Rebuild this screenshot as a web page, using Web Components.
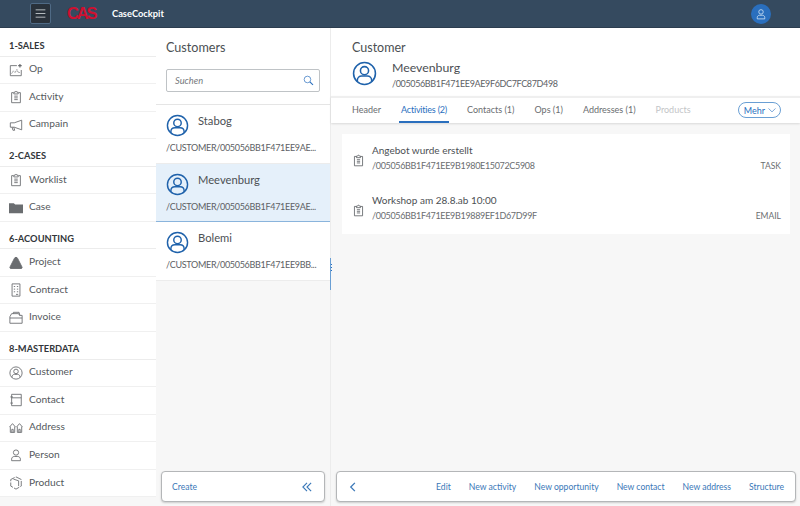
<!DOCTYPE html>
<html lang="en">
<head>
<meta charset="utf-8">
<title>CaseCockpit</title>
<style>
  html, body { margin: 0; height: 100%; overflow: hidden; }
  body { font-family: "Lato", "Noto Sans", sans-serif; color: #32363a; background: #f7f7f7; }
</style>
</head>
<body>
<case-cockpit></case-cockpit>

<script>
// all icons in one place, 16x16 box, grey or blue comes from currentColor
const ICONS = {
  menu: '<path d="M2 3.5h12M2 8h12M2 12.5h12"/>',
  person: '<circle cx="8" cy="5.2" r="3"/><path d="M3 14.5v-1.8c0-1.7 1.3-3 3-3h4c1.7 0 3 1.3 3 3v1.8z"/>',
  customer: '<circle cx="8" cy="8" r="7"/><circle cx="8" cy="6.2" r="2.6"/><path d="M3.4 13.2v-.8c0-1.6 1.2-2.8 2.8-2.8h3.6c1.6 0 2.8 1.2 2.8 2.8v.8"/>',
  chart: '<path d="M9 3H1.5v11.5H14V8"/><path d="M3 12l2-3 2 2 2-3.500 2 4 1.500-1.500" stroke-dasharray="1.500 1"/><path d="M12.500 1v4M10.500 3h4" stroke-width="1.400"/>',
  clipboard: '<path d="M5 3H3v11.500h10V3h-2"/><path d="M5.500 4.500V2.500h1.500a1 1 0 0 1 2 0h1.500v2z"/><path d="M6 7h4M6 9h4M6 11h4"/>',
  megaphone: '<path d="M14.500 2.500v11L6 10.500H1.500v-5H6z"/><path d="M3.500 10.500l1 3.500h2l-1-3.500"/>',
  folder: '<path fill="currentColor" stroke="none" d="M0 2.500h5.500l1.500 1.500h9v10H0z"/>',
  triangle: '<path fill="currentColor" stroke-linejoin="round" d="M8 1.500c1 0 1.500.6 2 1.500l4.800 9.500c.5 1 0 1.800-1 1.800H2.200c-1 0-1.500-.8-1-1.800L6 3C6.500 2.100 7 1.500 8 1.500z"/>',
  building: '<path d="M3.500 1h9v14h-9z"/><path d="M5.500 4h1.500M9 4h1.500M5.500 7h1.500M9 7h1.500M5.500 10h1.500M9 10h1.500M8 13h2.500"/>',
  invoice: '<path d="M1 14V6.500L3 3h8l1 2h3v9z"/><path d="M1 8h14M5 3V1.500h6.500l1 3.500"/>',
  notebook: '<path d="M3 1.500h11v13H3z"/><path d="M1.500 4.500h3M1.500 11.500h3M3 5.500h11"/>',
  houses: '<path d="M.5 7L4 3l3.500 4M1.500 6.500V13h5V6.500M3.200 13v-3.500h1.600V13"/><path d="M8.500 7L12 3l3.500 4M9.500 6.500V13h5V6.500M11.200 13v-3.500h1.600V13"/>',
  product: '<path d="M8 1l6 3v7.500L8 15l-6-3.500V4z" stroke-dasharray="7 1.400"/><path d="M5 3.500l6 2v6"/>',
  search: '<circle cx="6.500" cy="6.500" r="4.800"/><path d="M10 10l4.500 4.500" stroke-width="1.600"/>',
  down: '<path d="M2.500 5.500L8 11l5.500-5.500"/>',
  back: '<path d="M10.500 2.500L5 8l5.500 5.500" stroke-width="1.700"/>',
  collapse: '<path d="M8 2.500L2.500 8 8 13.500M13.500 2.500L8 8l5.500 5.500" stroke-width="1.500"/>'
};

class UiIcon extends HTMLElement {
  connectedCallback() {
    const size = this.getAttribute("size") || 16;
    this.attachShadow({ mode: "open" }).innerHTML = `
      <style>
        :host { display: inline-flex; flex: none; color: inherit; }
        svg { fill: none; stroke: currentColor; stroke-width: 1; display: block; }
      </style>
      <svg width="${size}" height="${size}" viewBox="0 0 16 16">${ICONS[this.getAttribute("name")]}</svg>`;
  }
}

class ShellBar extends HTMLElement {
  connectedCallback() {
    this.attachShadow({ mode: "open" }).innerHTML = `
      <style>
        :host { display: flex; align-items: center; height: 27px; flex: none; background: #354a5f;
                border-bottom: 1px solid #2c3d4f; padding: 0 0 0 30px; color: #fff; }
        .burger { width: 19px; height: 19px; border: 1px solid #4f6a85; background: #29313a; border-radius: 2px;
                  display: flex; align-items: center; justify-content: center; color: #d5dadd; }
        .logo { font: bold 16.500px "Liberation Sans", sans-serif; letter-spacing: -2.200px; color: #cf1030; margin-left: 16px; width: 45px; }
        .title { font: bold 9.300px "Lato", sans-serif; }
        .user { margin-left: auto; margin-right: 29px; width: 20px; height: 20px; border-radius: 50%;
                background: #2a6fbe; display: flex; align-items: center; justify-content: center; color: #dcebf8; }
      </style>
      <div class="burger"><ui-icon name="menu" size="13"></ui-icon></div>
      <div class="logo">CAS</div>
      <div class="title">CaseCockpit</div>
      <div class="user"><ui-icon name="person" size="12"></ui-icon></div>`;
  }
}

class NavGroup extends HTMLElement {
  connectedCallback() {
    this.attachShadow({ mode: "open" }).innerHTML = `
      <style>
        :host { display: block; }
        h3 { margin: 0; height: 27.550px; padding: 7px 0 0 9px; box-sizing: border-box; line-height: 20px; font-size: 9.300px; font-weight: 700;
             color: #32363a; border-bottom: 1px solid #ececec; }
      </style>
      <h3>${this.getAttribute("label")}</h3>
      <slot></slot>`;
  }
}

class NavItem extends HTMLElement {
  connectedCallback() {
    this.attachShadow({ mode: "open" }).innerHTML = `
      <style>
        :host { display: flex; align-items: center; height: 27.550px; box-sizing: border-box; padding: 0 0 3px 9px;
                border-bottom: 1px solid #f0f0f0; font-size: 10.200px; color: #5b5f63; }
        span { margin-left: 6px; color: #55595d; }
        ui-icon { color: #6a6d70; margin-top: 3px; }
      </style>
      <ui-icon name="${this.getAttribute("icon")}" size="14"></ui-icon><span><slot></slot></span>`;
  }
}

class NavPanel extends HTMLElement {
  connectedCallback() {
    this.attachShadow({ mode: "open" }).innerHTML = `
      <style>
        :host { display: block; width: 156px; flex: none; background: #f7f7f7; }
        .list { background: #fff; padding-top: 1px; }
      </style>
      <div class="list"><slot></slot></div>`;
  }
}

class CustomerItem extends HTMLElement {
  connectedCallback() {
    this.attachShadow({ mode: "open" }).innerHTML = `
      <style>
        :host { display: block; height: 58.500px; box-sizing: border-box; padding: 9px 0 0 10px; background: #fff;
                border-bottom: 1px solid #ececec; flex: none; }
        :host([selected]) { background: #e5f0fa; border-bottom-color: #8ab4dc; }
        .top { display: flex; height: 25px; color: #1f62ab; }
        .name { font-size: 11.200px; color: #4c5054; margin: -1px 0 0 9px; line-height: 16px; }
        .path { font-size: 9px; letter-spacing: -.3px; color: #5d6165; margin-top: 3px; white-space: nowrap; line-height: 12px; }
      </style>
      <div class="top"><ui-icon name="customer" size="23"></ui-icon><div class="name">${this.getAttribute("name")}</div></div>
      <div class="path">${this.getAttribute("path")}</div>`;
  }
}

class CustomerList extends HTMLElement {
  connectedCallback() {
    this.attachShadow({ mode: "open" }).innerHTML = `
      <style>
        :host { display: flex; flex-direction: column; width: 174px; flex: none; background: #f7f7f7;
                border-right: 1px solid #ececec; }
        .head { background: #fff; height: 77px; flex: none; box-sizing: border-box; padding: 11px 10px 0; border-bottom: 1px solid #e5e5e5; }
        h2 { margin: 0; font-size: 12.600px; font-weight: 400; color: #4b4f53; line-height: 17px; }
        .search { display: flex; align-items: center; justify-content: space-between; box-sizing: border-box; height: 23px;
                  margin-top: 13px; padding: 0 5px 0 8px; border: 1px solid #bfc3c6; border-radius: 2px; color: #2a6fbe; }
        .search i { font-size: 9.300px; color: #75797d; }
        .foot { margin: auto 5px 4px 5px; }
      </style>
      <div class="head">
        <h2>Customers</h2>
        <div class="search"><i>Suchen</i><ui-icon name="search" size="11"></ui-icon></div>
      </div>
      <slot></slot>
      <div class="foot"><slot name="footer"></slot></div>`;
  }
}

class TabBar extends HTMLElement {
  connectedCallback() {
    this.attachShadow({ mode: "open" }).innerHTML = `
      <style>
        :host { display: flex; align-items: stretch; height: 27px; box-sizing: border-box; padding: 0 19px; background: #fff; gap: 16px;
                border-top: 2px solid #efefef; box-shadow: 0 1px 2px rgba(0,0,0,.12); font-size: 9px; flex: none; }
        .more { margin: 4px 0 0 auto; align-self: flex-start; height: 16px; box-sizing: border-box; padding: 0 3px 0 5px; border: 1px solid #6a9fd4; border-radius: 8px;
                color: #2a6fbe; display: flex; align-items: center; gap: 2px; }
      </style>
      <slot></slot>
      <div class="more">Mehr <ui-icon name="down" size="10"></ui-icon></div>`;
  }
}

class TabItem extends HTMLElement {
  connectedCallback() {
    this.attachShadow({ mode: "open" }).innerHTML = `
      <style>
        :host { display: block; box-sizing: border-box; padding: 0 2px; line-height: 23px; color: #6a6d70; white-space: nowrap; }
        :host([active]) { color: #2a6fbe; border-bottom: 2px solid #2a6fbe; letter-spacing: -.2px; }
        :host([disabled]) { color: #c3c5c7; }
      </style>
      <slot></slot>`;
  }
}

class ActivityRow extends HTMLElement {
  connectedCallback() {
    this.attachShadow({ mode: "open" }).innerHTML = `
      <style>
        :host { display: flex; align-items: center; height: 50px; padding: 0 9px 0 10px; color: #5b5f63; }
        .text { margin-left: 7px; flex: 1; }
        .title { font-size: 10px; color: #4c5054; line-height: 14px; margin-top: -3px; }
        .path { font-size: 9px; letter-spacing: -.33px; color: #6a6d70; line-height: 12px; margin-top: 3px; }
        .kind { font-size: 8.500px; color: #6a6d70; margin-top: 13px; }
        ui-icon { margin-top: 2px; }
      </style>
      <ui-icon name="clipboard" size="13"></ui-icon>
      <div class="text">
        <div class="title">${this.getAttribute("title")}</div>
        <div class="path">${this.getAttribute("path")}</div>
      </div>
      <div class="kind">${this.getAttribute("kind")}</div>`;
  }
}

class FooterBar extends HTMLElement {
  connectedCallback() {
    this.attachShadow({ mode: "open" }).innerHTML = `
      <style>
        :host { display: flex; align-items: center; height: 31px; box-sizing: border-box; padding: 0 11px 0 10px; background: #fff;
                border: 1px solid #b4b6b8; border-radius: 4px; box-shadow: 0 1px 2px rgba(0,0,0,.18);
                color: #3a78b8; font-size: 8.600px; gap: 18px; }
      </style>
      <slot></slot>`;
  }
}

class DetailPanel extends HTMLElement {
  connectedCallback() {
    this.attachShadow({ mode: "open" }).innerHTML = `
      <style>
        :host { display: flex; flex-direction: column; flex: 1; min-width: 0; background: #f7f7f7; }
        .head { background: #fff; height: 68px; flex: none; box-sizing: border-box; padding: 11px 10px 0 21px; }
        h2 { margin: 0; font-size: 12.500px; font-weight: 400; color: #4b4f53; line-height: 17px; }
        .who { display: flex; margin-top: 5px; color: #1f62ab; }
        .name { font-size: 12.300px; color: #4c5054; line-height: 16px; }
        .id { font-size: 9px; letter-spacing: -.36px; color: #5d6165; line-height: 12px; margin-top: 2px; }
        .info { margin: -1px 0 0 15px; }
        .card { background: #fff; margin: 11px 10px 0 11px; }
        .foot { margin: auto 4px 4px 5px; }
      </style>
      <div class="head">
        <h2>Customer</h2>
        <div class="who">
          <ui-icon name="customer" size="25"></ui-icon>
          <div class="info"><div class="name">${this.getAttribute("name")}</div><div class="id">${this.getAttribute("path")}</div></div>
        </div>
      </div>
      <slot name="tabs"></slot>
      <div class="card"><slot></slot></div>
      <div class="foot"><slot name="footer"></slot></div>`;
  }
}

class CaseCockpit extends HTMLElement {
  connectedCallback() {
    this.attachShadow({ mode: "open" }).innerHTML = `
      <style>
        :host { display: flex; flex-direction: column; height: 100vh; position: relative; overflow: hidden; }
        .main { display: flex; flex: 1; min-height: 0; }
        /* splitter handle lies over the column border */
        .grip { position: absolute; left: 330px; top: 258px; width: 1px; height: 32px; background: #6a9fd4; }
        .grip::after { content: ""; position: absolute; left: 1px; top: 6px; width: 1px; height: 9px;
                       background: repeating-linear-gradient(#2a6fbe 0 1px, transparent 1px 3px); }
        .spacer { margin-left: auto; }
      </style>
      <shell-bar></shell-bar>
      <div class="main">
        <nav-panel>
          <nav-group label="1-SALES">
            <nav-item icon="chart">Op</nav-item>
            <nav-item icon="clipboard">Activity</nav-item>
            <nav-item icon="megaphone">Campain</nav-item>
          </nav-group>
          <nav-group label="2-CASES">
            <nav-item icon="clipboard">Worklist</nav-item>
            <nav-item icon="folder">Case</nav-item>
          </nav-group>
          <nav-group label="6-ACOUNTING">
            <nav-item icon="triangle">Project</nav-item>
            <nav-item icon="building">Contract</nav-item>
            <nav-item icon="invoice">Invoice</nav-item>
          </nav-group>
          <nav-group label="8-MASTERDATA">
            <nav-item icon="customer">Customer</nav-item>
            <nav-item icon="notebook">Contact</nav-item>
            <nav-item icon="houses">Address</nav-item>
            <nav-item icon="person">Person</nav-item>
            <nav-item icon="product">Product</nav-item>
          </nav-group>
        </nav-panel>
        <customer-list>
          <customer-item name="Stabog" path="/CUSTOMER/005056BB1F471EE9AE..."></customer-item>
          <customer-item selected name="Meevenburg" path="/CUSTOMER/005056BB1F471EE9AE..."></customer-item>
          <customer-item name="Bolemi" path="/CUSTOMER/005056BB1F471EE9BB..."></customer-item>
          <footer-bar slot="footer">
            <span>Create</span><span class="spacer"></span><ui-icon name="collapse" size="12"></ui-icon>
          </footer-bar>
        </customer-list>
        <detail-panel name="Meevenburg" path="/005056BB1F471EE9AE9F6DC7FC87D498">
          <tab-bar slot="tabs">
            <tab-item>Header</tab-item>
            <tab-item active>Activities (2)</tab-item>
            <tab-item>Contacts (1)</tab-item>
            <tab-item>Ops (1)</tab-item>
            <tab-item>Addresses (1)</tab-item>
            <tab-item disabled>Products</tab-item>
          </tab-bar>
          <activity-row title="Angebot wurde erstellt" path="/005056BB1F471EE9B1980E15072C5908" kind="TASK"></activity-row>
          <activity-row title="Workshop am 28.8.ab 10:00" path="/005056BB1F471EE9B19889EF1D67D99F" kind="EMAIL"></activity-row>
          <footer-bar slot="footer">
            <ui-icon name="back" size="12"></ui-icon><span class="spacer"></span>
            <span>Edit</span><span>New activity</span><span>New opportunity</span><span>New contact</span><span>New address</span><span>Structure</span>
          </footer-bar>
        </detail-panel>
      </div>
      <div class="grip"></div>`;
  }
}

customElements.define("ui-icon", UiIcon);
customElements.define("shell-bar", ShellBar);
customElements.define("nav-group", NavGroup);
customElements.define("nav-item", NavItem);
customElements.define("nav-panel", NavPanel);
customElements.define("customer-item", CustomerItem);
customElements.define("customer-list", CustomerList);
customElements.define("tab-bar", TabBar);
customElements.define("tab-item", TabItem);
customElements.define("activity-row", ActivityRow);
customElements.define("footer-bar", FooterBar);
customElements.define("detail-panel", DetailPanel);
customElements.define("case-cockpit", CaseCockpit);
</script>
</body>
</html>
